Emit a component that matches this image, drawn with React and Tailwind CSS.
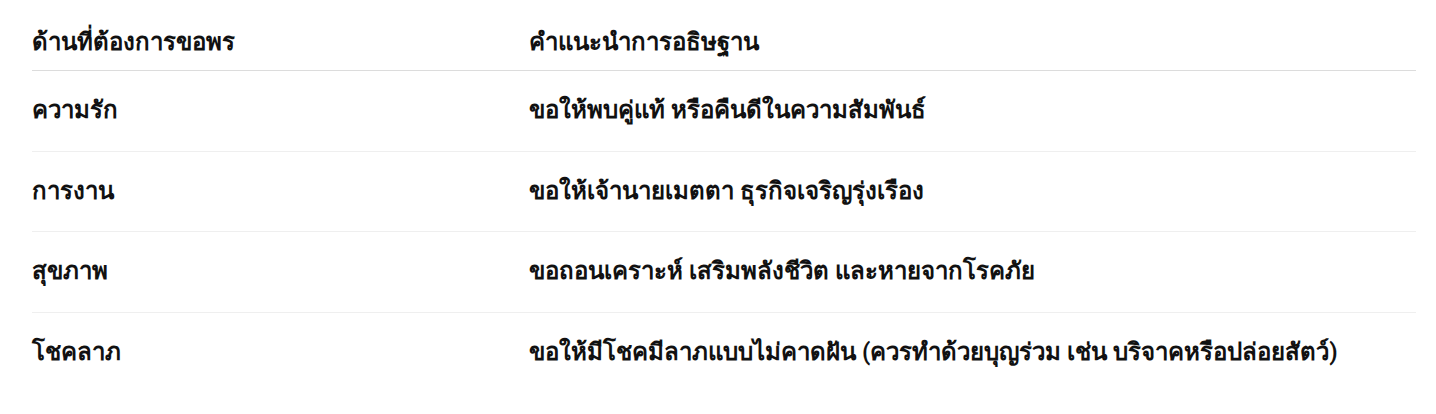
import React from 'react';

const rows = [
    ["ความรัก", "ขอให้พบคู่แท้ หรือคืนดีในความสัมพันธ์"],
    ["การงาน", "ขอให้เจ้านายเมตตา ธุรกิจเจริญรุ่งเรือง"],
    ["สุขภาพ", "ขอถอนเคราะห์ เสริมพลังชีวิต และหายจากโรคภัย"],
    ["โชคลาภ", "ขอให้มีโชคมีลาภแบบไม่คาดฝัน (ควรทำด้วยบุญร่วม เช่น บริจาคหรือปล่อยสัตว์)"],
];

const App = () => {
    return (
        <div className="bg-white min-h-[414px] pl-8 pr-5 pt-[14px] font-['Roboto',sans-serif] text-[#111]">
            <table className="w-full border-collapse text-left text-[24px] leading-[31.5px]">
                <thead>
                    <tr className="border-b border-[#dcdcdc]">
                        <th className="w-[497px] py-3 leading-8 font-bold">ด้านที่ต้องการขอพร</th>
                        <th className="py-3 leading-8 font-bold">คำแนะนำการอธิษฐาน</th>
                    </tr>
                </thead>
                <tbody>
                    {rows.map(([a, b], i) => (
                        <tr key={a} className={i < rows.length - 1 ? "border-b border-[#efefef]" : ""}>
                            <td className="py-6 font-bold">{a}</td>
                            <td className="py-6 font-semibold">{b}</td>
                        </tr>
                    ))}
                </tbody>
            </table>
        </div>
    );
};

export default App;
